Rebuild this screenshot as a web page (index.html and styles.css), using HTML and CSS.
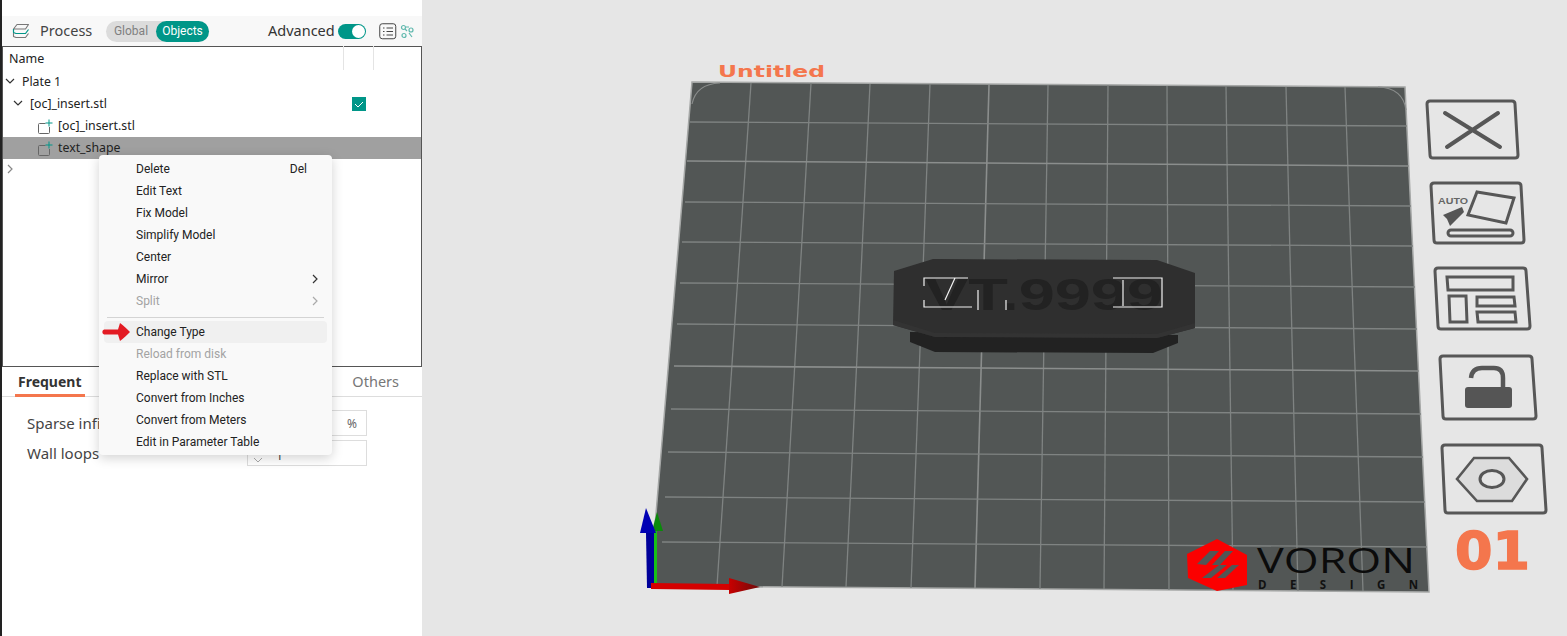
FILE: index.html
```html
<!DOCTYPE html>
<html>
  <head>
    <meta charset="utf-8" />
    <title>Process - Objects</title>
    <link rel="stylesheet" href="styles.css">
  </head>
  <body>
    <aside class="sidebar">
      <div class="process-bar">
        <svg class="stack-icon" width="18" height="16" viewBox="0 0 18 16" fill="none">
          <path d="M5 1.5h11.5l-3 4.5H1.5z" stroke="#777" stroke-width="1.1" stroke-linejoin="round" />
          <path d="M1.5 6v3.5l2.5 1h9.5l3-4" stroke="#009688" stroke-width="1.2" stroke-linejoin="round" />
          <path d="M1.5 10v3.5l2.5 1h9.5l3-4" stroke="#777" stroke-width="1.1" stroke-linejoin="round" />
        </svg>
        <span class="process-title">Process</span>
        <div class="scope-switch">
          <span class="scope-global">Global</span>
          <span class="scope-objects">Objects</span>
        </div>
        <span class="advanced-label">Advanced</span>
        <span class="toggle"><span class="toggle-knob"></span></span>
        <svg class="list-icon" width="18" height="17" viewBox="0 0 18 17" fill="none">
          <rect x="0.75" y="0.75" width="16" height="15" rx="2.5" stroke="#444" stroke-width="1" />
          <path d="M4 5h1.5M4 8.5h1.5M4 12h1.5M7.5 5h6.5M7.5 8.5h6.5M7.5 12h6.5" stroke="#444" stroke-width="1.1" />
        </svg>
        <svg class="tune-icon" width="14" height="15" viewBox="0 0 14 15" fill="none" stroke="#5fb8ad" stroke-width="1.2">
          <circle cx="3.5" cy="3.5" r="2" />
          <circle cx="11" cy="6" r="2" />
          <circle cx="4" cy="11.5" r="2" />
          <path d="M5 5l2 2M9 9l3 4M6 3h3" />
        </svg>
      </div>

      <div class="tree">
        <div class="tree-head">
          <span class="tree-name">Name</span>
          <span class="tree-col"></span>
          <span class="tree-col"></span>
        </div>
        <div class="tree-row">
          <svg class="chevron" width="10" height="10" viewBox="0 0 10 10"><path d="M1 3l4 4 4-4" /></svg>
          <span>Plate 1</span>
        </div>
        <div class="tree-row depth-1">
          <svg class="chevron" width="10" height="10" viewBox="0 0 10 10"><path d="M1 3l4 4 4-4" /></svg>
          <span>[oc]_insert.stl</span>
          <span class="check">
            <svg width="14" height="14" viewBox="0 0 14 14" fill="none"><path d="M3 7l3 3 5-5" stroke="#fff" stroke-width="1" /></svg>
          </span>
        </div>
        <div class="tree-row depth-2">
          <svg class="part-icon" width="17" height="17" viewBox="0 0 17 17" fill="none">
            <path d="M8.5 6.5H2.5a1 1 0 0 0-1 1v8a1 1 0 0 0 1 1h9a1 1 0 0 0 1-1V10" stroke="#666" />
            <path d="M12 2.5v7M8.5 6h7" stroke="#009688" />
          </svg>
          <span>[oc]_insert.stl</span>
        </div>
        <div class="tree-row depth-2 selected">
          <svg class="part-icon" width="17" height="17" viewBox="0 0 17 17" fill="none">
            <path d="M8.5 6.5H2.5a1 1 0 0 0-1 1v8a1 1 0 0 0 1 1h9a1 1 0 0 0 1-1V10" stroke="#666" />
            <path d="M12 2.5v7M8.5 6h7" stroke="#009688" />
          </svg>
          <span>text_shape</span>
        </div>
        <div class="tree-row">
          <svg class="chevron closed" width="10" height="10" viewBox="0 0 10 10"><path d="M3 1l4 4-4 4" /></svg>
        </div>
      </div>

      <div class="tabs">
        <span class="tab active">Frequent</span>
        <span class="tab">Others</span>
      </div>

      <div class="settings">
        <div class="setting">
          <span class="setting-label">Sparse infi</span>
          <span class="setting-input"><span class="unit">%</span></span>
        </div>
        <div class="setting">
          <span class="setting-label">Wall loops</span>
          <span class="setting-input">
            <svg class="spin" width="10" height="6" viewBox="0 0 10 6"><path d="M1 1l4 4 4-4" /></svg>
            <span class="setting-value">1</span>
          </span>
        </div>
      </div>

      <div class="context-menu">
        <div class="menu-item">Delete<span class="menu-key">Del</span></div>
        <div class="menu-item">Edit Text</div>
        <div class="menu-item">Fix Model</div>
        <div class="menu-item">Simplify Model</div>
        <div class="menu-item">Center</div>
        <div class="menu-item">Mirror
          <svg class="menu-arrow" width="6" height="10" viewBox="0 0 6 10"><path d="M1 1l4 4-4 4" /></svg>
        </div>
        <div class="menu-item disabled">Split
          <svg class="menu-arrow" width="6" height="10" viewBox="0 0 6 10"><path d="M1 1l4 4-4 4" /></svg>
        </div>
        <div class="menu-sep"></div>
        <div class="menu-item hovered">Change Type
          <svg class="red-arrow" width="28" height="20" viewBox="0 0 28 20">
            <path d="M2 7.5h14l2-6.5c4 3 7 6 10 9-3 3-6 6-10 9l-2-6.5H2a2.7 2.7 0 0 1 0-5z" fill="#e31b23" />
          </svg>
        </div>
        <div class="menu-item disabled">Reload from disk</div>
        <div class="menu-item">Replace with STL</div>
        <div class="menu-item">Convert from Inches</div>
        <div class="menu-item">Convert from Meters</div>
        <div class="menu-item">Edit in Parameter Table</div>
      </div>
    </aside>

    <svg class="viewport" viewBox="422 0 1145 636" width="1145" height="636">
      <defs>
        <linearGradient id="redHead" x1="0" x2="1" y1="0" y2="0">
          <stop offset="0" stop-color="#c80000" />
          <stop offset="1" stop-color="#6e0b0b" />
        </linearGradient>
      </defs>

      <text class="plate-name" x="718" y="77" textLength="107" lengthAdjust="spacingAndGlyphs">Untitled</text>

      <!-- plate -->
      <polygon points="692,82 1405,87 1429,592 650,586" fill="#525655" />
      <path d="M692,82 L1405,87 L1429,592 L650,586 Z" fill="none" stroke="#a5a7a6" stroke-width="1.5" />
      <path d="M692,104 Q696,84 720,83" fill="none" stroke="#8a8d8c" stroke-width="1.2" />
      <path d="M1378,87 Q1403,88 1406,110" fill="none" stroke="#8a8d8c" stroke-width="1.2" />

      <g class="grid-lines">
        <line x1="751" y1="83" x2="717" y2="586" />
        <line x1="811" y1="83" x2="782" y2="587" />
        <line x1="870" y1="84" x2="846" y2="587" />
        <line x1="930" y1="84" x2="911" y2="588" />
        <line x1="989" y1="85" x2="975" y2="588" class="grid-major" />
        <line x1="1048" y1="85" x2="1040" y2="589" />
        <line x1="1108" y1="85" x2="1104" y2="589" />
        <line x1="1167" y1="86" x2="1169" y2="590" />
        <line x1="1226" y1="86" x2="1233" y2="590" />
        <line x1="1286" y1="87" x2="1298" y2="591" />
        <line x1="1345" y1="87" x2="1363" y2="591" />
        <line x1="690" y1="122" x2="1407" y2="126" />
        <line x1="687" y1="161" x2="1409" y2="166" class="grid-major" />
        <line x1="685" y1="202" x2="1411" y2="206" />
        <line x1="682" y1="242" x2="1413" y2="246" />
        <line x1="680" y1="283" x2="1415" y2="287" />
        <line x1="677" y1="324" x2="1417" y2="329" />
        <line x1="674" y1="366" x2="1419" y2="371" class="grid-major" />
        <line x1="671" y1="409" x2="1421" y2="414" />
        <line x1="668" y1="452" x2="1423" y2="457" />
        <line x1="665" y1="497" x2="1425" y2="502" />
        <line x1="662" y1="542" x2="1427" y2="547" />
      </g>

      <!-- text plate model -->
      <polygon points="910,332 910,342 935,352 1153,353 1178,343 1178,335" fill="#222" />
      <polygon points="894,271 933,259 1157,260 1195,273 1195,328 1157,338 935,337 893,325" fill="#2f2f2f" />
      <polygon points="893,320 935,333 1157,334 1195,323 1195,328 1157,338 935,337 893,325" fill="#333" />
      <text class="model-text" x="925" y="310" textLength="238" lengthAdjust="spacingAndGlyphs">VT.9999</text>
      <path d="M924,286 V278 H968 M924,300 V307 H972 M955,278 L945,300 M978,290 V310 M1006,300 V310 M1113,278 H1162 V307 H1113 M1123,280 V306"
        fill="none" stroke="#f2f2f2" stroke-width="1.2" />

      <!-- logo -->
      <polygon points="1217,539 1247,555 1247,585 1217,591 1188,578 1187,554" fill="#fb0000" />
      <path d="M1197,564 L1210,551 H1219 L1206,565 Z M1212,565 L1225,551 H1233 L1220,565 Z" fill="#525655" />
      <path d="M1202,578 L1219,565 H1227 L1211,578 Z M1217,578 L1232,565 H1239 L1225,578 Z" fill="#525655" />
      <text class="logo-main" x="1257" y="573" textLength="158" lengthAdjust="spacingAndGlyphs">VORON</text>
      <text class="logo-sub" x="1258" y="589" textLength="160">DESIGN</text>

      <!-- axes -->
      <polygon points="653,530 657,530 657,586 653,586" fill="#18c018" />
      <polygon points="657,512 652,531 663,531" fill="#0a8a0a" />
      <polygon points="646,533 654,533 654,588 647,588" fill="#00009a" />
      <polygon points="646,508 640,533 656,533" fill="#0000b4" />
      <polygon points="651,583 730,584 730,590 651,589" fill="#d40000" />
      <polygon points="729,578 760,587 729,594" fill="url(#redHead)" />

      <!-- side buttons -->
      <g class="side-icons">
        <path d="M1430,101 H1512 Q1515,101 1515,104 L1518,155 Q1518,158 1515,158 H1433 Q1430,158 1430,155 L1427,104 Q1427,101 1430,101 Z" />
        <path class="thick" d="M1445,113 L1500,147 M1498,113 L1447,147" />

        <path d="M1434,183 H1518 Q1521,183 1521,186 L1524,240 Q1524,243 1521,243 H1437 Q1434,243 1434,240 L1431,186 Q1431,183 1434,183 Z" />
        <path d="M1477,192 L1514,198 L1506,223 L1468,215 Z" />
        <rect x="1448" y="230" width="65" height="6" rx="3" />
        <path class="solid" d="M1443,215 L1462,207 L1464,212 L1457,219 L1450,226 L1447,219 Z" />
        <text class="auto-label" x="1438" y="204" textLength="30" lengthAdjust="spacingAndGlyphs">AUTO</text>

        <path d="M1438,268 H1523 Q1526,268 1526,271 L1530,326 Q1530,329 1527,329 H1441 Q1438,329 1438,326 L1435,271 Q1435,268 1438,268 Z" />
        <path d="M1447,277 H1513 V290 H1448 Z M1449,296 H1466 L1467,322 H1450 Z M1477,297 H1514 L1515,306 H1477 Z M1477,312 H1515 L1516,322 H1478 Z" />

        <path d="M1443,356 H1529 Q1532,356 1532,359 L1536,416 Q1536,419 1533,419 H1446 Q1443,419 1443,416 L1440,359 Q1440,356 1443,356 Z" />
        <path class="shackle" d="M1471,378 Q1472,368 1482,368 H1494 Q1503,368 1503,378 V388" />
        <rect class="solid" x="1465" y="387" width="47" height="21" rx="3" />

        <path d="M1445,445 H1539 Q1542,445 1542,448 L1546,510 Q1546,513 1543,513 H1448 Q1445,513 1445,510 L1442,448 Q1442,445 1445,445 Z" />
        <polygon class="nut" points="1457,479 1474,458 1509,458 1527,479 1512,501 1477,501" />
        <ellipse cx="1492" cy="479" rx="12" ry="8.5" />
      </g>
      <text class="plate-number" x="1455" y="569" textLength="75" lengthAdjust="spacingAndGlyphs">01</text>
    </svg>
  </body>
</html>
```

FILE: styles.css
```css
* {
  box-sizing: border-box;
}

body {
  margin: 0;
  height: 636px;
  display: flex;
  overflow: hidden;
  background-color: #e6e6e6;
  font-family: "Noto Sans", sans-serif;
  color: #222;
}

.sidebar {
  position: relative;
  width: 422px;
  height: 636px;
  padding-top: 16px;
  border-left: 2px solid #222;
  background-color: #fff;
}

.process-bar {
  height: 30px;
  display: flex;
  align-items: center;
  background-color: #f8f8f8;
  font-size: 14.5px;
  color: #444;
}

.stack-icon {
  margin-left: 10px;
}

.process-title {
  margin-left: 10px;
  margin-bottom: 2px;
  width: 66px;
}

.scope-switch {
  width: 103px;
  height: 21px;
  display: flex;
  align-items: center;
  border-radius: 11px;
  background-color: #dcdcdc;
  font-family: Roboto, sans-serif;
  font-size: 12px;
}

.scope-global {
  width: 50px;
  text-align: center;
  color: #808080;
}

.scope-objects {
  width: 53px;
  height: 21px;
  line-height: 21px;
  text-align: center;
  border-radius: 11px;
  background-color: #009688;
  color: #fff;
}

.advanced-label {
  margin-left: 59px;
  margin-bottom: 2px;
  width: 70px;
  color: #333;
}

.toggle {
  width: 28px;
  height: 15px;
  padding: 1px;
  display: flex;
  justify-content: flex-end;
  border-radius: 8px;
  background-color: #009688;
}

.toggle-knob {
  width: 13px;
  height: 13px;
  border-radius: 50%;
  background-color: #fff;
}

.list-icon {
  margin-left: 13px;
}

.tune-icon {
  margin-left: 3px;
}

.tree {
  height: 321px;
  border: 1px solid #555;
}

.tree-head {
  height: 24px;
  display: flex;
  align-items: center;
  padding-bottom: 2px;
  font-size: 12.5px;
}

.tree-name {
  flex: 1;
  padding-left: 6px;
}

.tree-col {
  width: 30px;
  height: 24px;
  border-left: 1px solid #e4e4e4;
}

.tree-col:last-child {
  width: 48px;
}

.tree-row {
  height: 22px;
  display: flex;
  align-items: center;
  padding-left: 2px;
  padding-bottom: 2px;
  font-size: 12.3px;
}

.depth-1 {
  padding-left: 10px;
}

.depth-2 {
  padding-left: 34px;
}

.selected {
  background-color: #a0a0a0;
}

.chevron {
  margin-right: 7px;
  fill: none;
  stroke: #333;
  stroke-width: 1.2;
}

.chevron.closed {
  stroke: #888;
}

.part-icon {
  margin-right: 4px;
}

.check {
  width: 14px;
  height: 14px;
  margin-top: 2px;
  margin-left: auto;
  margin-right: 55px;
  background-color: #009688;
}

.check svg {
  display: block;
}

.tabs {
  height: 30px;
  display: flex;
  justify-content: space-between;
  align-items: center;
  padding: 0 23px 0 16px;
  border-bottom: 1px solid #ddd;
  font-size: 14.5px;
  color: #777;
}

.tab {
  height: 30px;
  line-height: 29px;
}

.tab.active {
  padding: 0 3px;
  margin-left: -3px;
  border-bottom: 3px solid #f4764d;
  font-size: 14px;
  font-weight: 700;
  color: #333;
}

.settings {
  padding: 13px 55px 0 25px;
  display: flex;
  flex-direction: column;
  gap: 4px;
}

.setting {
  height: 26px;
  display: flex;
  align-items: center;
  justify-content: space-between;
  font-size: 15px;
  color: #444;
}

.setting-label {
  white-space: nowrap;
}

.setting-input {
  width: 120px;
  height: 26px;
  display: flex;
  align-items: center;
  border: 1px solid #ddd;
  font-size: 12px;
}

.unit {
  margin-left: auto;
  margin-right: 9px;
  color: #666;
}

.spin {
  margin-left: 5px;
  margin-top: 13px;
  fill: none;
  stroke: #aaa;
}

.setting-value {
  margin-left: 13px;
  margin-top: 5px;
}

.context-menu {
  position: absolute;
  left: 97px;
  top: 155px;
  width: 233px;
  height: 300px;
  padding: 3px 5px;
  border-radius: 4px;
  background-color: #f9f9f9;
  box-shadow: 0 3px 12px rgba(0, 0, 0, 0.18);
  font-family: Roboto, sans-serif;
  font-size: 12px;
  color: #222;
}

.menu-item {
  position: relative;
  height: 22px;
  line-height: 22px;
  padding-left: 32px;
  border-radius: 4px;
}

.menu-key {
  position: absolute;
  right: 20px;
}

.menu-arrow {
  position: absolute;
  right: 9px;
  top: 6px;
  fill: none;
  stroke: #333;
  stroke-width: 1.2;
}

.disabled {
  color: #a3a3a3;
}

.disabled .menu-arrow {
  stroke: #aaa;
}

.menu-sep {
  height: 1px;
  margin: 5px 3px 3px;
  background-color: #d4d4d4;
}

.hovered {
  background-color: #f0f0f0;
}

.red-arrow {
  position: absolute;
  left: -2px;
  top: 1px;
}

.viewport {
  display: block;
  flex: none;
}

.plate-name {
  font-family: "DejaVu Sans", sans-serif;
  font-weight: 700;
  font-size: 15px;
  fill: #f4764d;
}

.grid-lines line {
  stroke: #7f8382;
  stroke-width: 1.3;
}

.grid-lines .grid-major {
  stroke: #8b8e8d;
  stroke-width: 1.6;
}

.model-text {
  font-family: "Liberation Sans", sans-serif;
  font-weight: 700;
  font-size: 44px;
  fill: #222;
}

.logo-main {
  font-family: "Open Sans", sans-serif;
  font-weight: 400;
  font-size: 35px;
  fill: #0b0b0b;
}

.logo-sub {
  font-family: "Open Sans", sans-serif;
  font-weight: 700;
  font-size: 11.5px;
  fill: #111;
}

.side-icons path,
.side-icons rect,
.side-icons ellipse {
  fill: none;
  stroke: #575757;
  stroke-width: 3;
}

.side-icons .thick {
  stroke-width: 4;
  stroke-linecap: round;
}

.side-icons .shackle {
  stroke-width: 4.5;
}

.side-icons .solid {
  fill: #555;
  stroke: none;
}

.side-icons .nut {
  fill: #dcdcdc;
  stroke: #575757;
  stroke-width: 2.6;
}

.side-icons ellipse {
  fill: #e6e6e6;
}

.auto-label {
  font-family: "Liberation Sans", sans-serif;
  font-weight: 700;
  font-size: 9px;
  fill: #666;
}

.plate-number {
  font-family: "DejaVu Sans", sans-serif;
  font-weight: 700;
  font-size: 52px;
  fill: #f4764d;
  stroke: #f4764d;
  stroke-width: 1.5;
}
```
